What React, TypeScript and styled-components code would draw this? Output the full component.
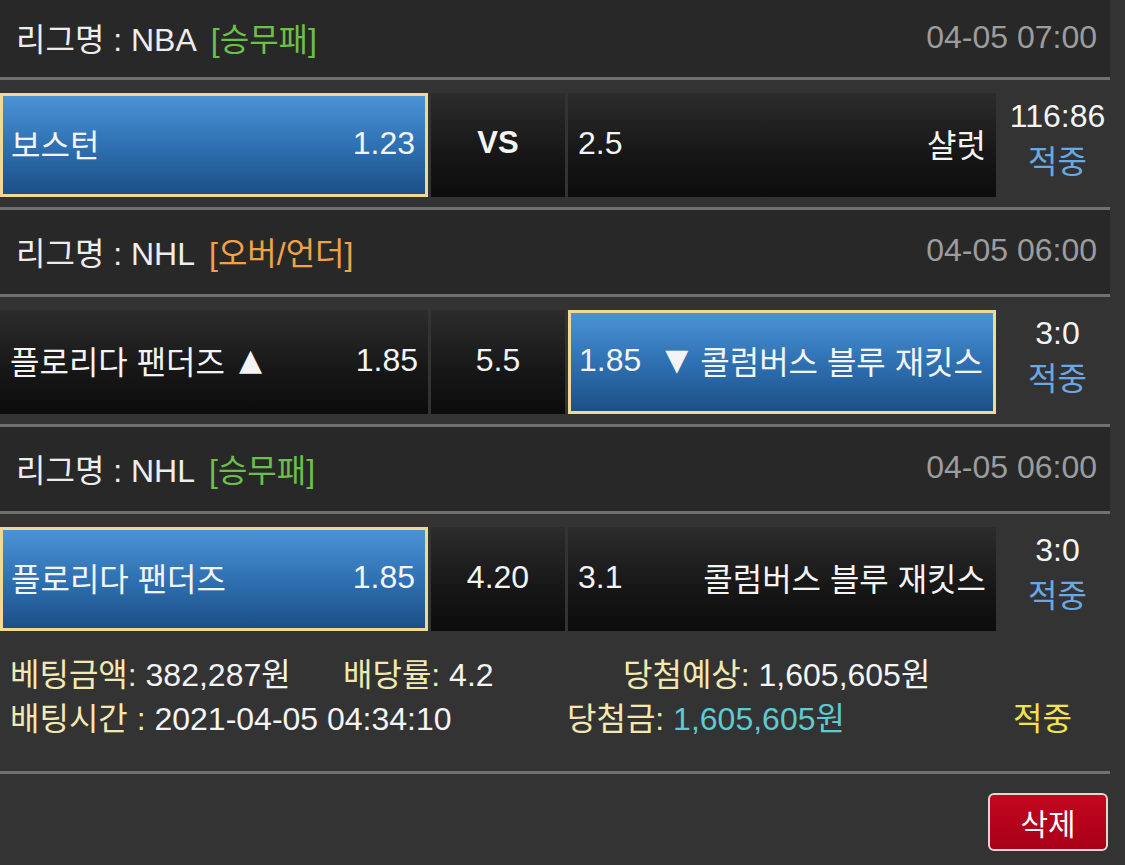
import React from 'react';
import styled, { createGlobalStyle } from 'styled-components';

const GlobalStyle = createGlobalStyle`
    html, body {
        margin: 0;
        padding: 0;
        background: #333333;
    }
    body {
        font-family: "Liberation Sans", "Noto Sans CJK KR", sans-serif;
        color: #f2f2f2;
    }
`;

const Page = styled.div`
    width: 1110px;
    background: #333333;
`;

const LeagueHeader = styled.div<{ $h: number }>`
    height: ${p => p.$h}px;
    display: flex;
    align-items: center;
    justify-content: space-between;
    padding: 0 13px 3px 16px;
    box-sizing: border-box;
    background: #282828;
    border-bottom: 3px solid #707070;
    font-size: 32px;
`;

const LeagueName = styled.span`
    color: #ededed;
`;

const BetType = styled.span<{ $color: string }>`
    color: ${p => p.$color};
    margin-left: 14px;
`;

const MatchTime = styled.span`
    color: #9c9c9c;
`;

const MatchRow = styled.div<{ $line?: boolean }>`
    display: grid;
    grid-template-columns: 428px 134px 428px 1fr;
    column-gap: 3px;
    padding: 13px 0 10px;
    border-bottom: ${p => (p.$line ? '3px solid #707070' : 'none')};
`;

const Cell = styled.div<{ $picked?: boolean; $center?: boolean }>`
    height: 104px;
    box-sizing: border-box;
    display: flex;
    align-items: center;
    justify-content: ${p => (p.$center ? 'center' : 'space-between')};
    padding: 0 10px 4px;
    font-size: 32px;
    color: #f4f4f4;
    background: ${p =>
        p.$picked
            ? 'linear-gradient(to bottom, #4b93d6 0%, #2f71b3 50%, #1c4f86 100%)'
            : 'linear-gradient(to bottom, #2c2c2c 0%, #161616 60%, #0c0c0c 100%)'};
    border: ${p => (p.$picked ? '3px solid #f2d993' : 'none')};
    padding-left: ${p => (p.$picked ? '8px' : '10px')};
`;

const TeamName = styled.span`
    display: flex;
    align-items: center;
`;

const Arrow = styled.span<{ $side: 'before' | 'after' }>`
    font-family: "DejaVu Sans", sans-serif;
    font-size: 30px;
    line-height: 1;
    ${p => (p.$side === 'after' ? 'margin-left: 14px;' : 'margin-right: 12px;')}
`;

const VsText = styled.span`
    font-weight: bold;
    font-size: 31px;
`;

const ScoreBox = styled.div`
    display: flex;
    flex-direction: column;
    align-items: center;
    justify-content: center;
    padding: 0 0 12px 6px;
    font-size: 32px;
    line-height: 46px;
`;

const Score = styled.span`
    color: #f4f4f4;
`;

const ResultText = styled.span<{ $color: string }>`
    color: ${p => p.$color};
`;

const Summary = styled.div`
    padding: 9px 0 33px 10px;
    border-bottom: 3px solid #707070;
    font-size: 32px;
`;

const SummaryLine = styled.div`
    display: flex;
    height: 44px;
    align-items: center;
`;

const SummaryItem = styled.span<{ $w?: number }>`
    ${p => (p.$w ? `width: ${p.$w}px;` : '')}
    flex-shrink: 0;
    white-space: nowrap;
`;

const Label = styled.span`
    color: #f3e9ae;
`;

const Value = styled.span<{ $color?: string }>`
    color: ${p => p.$color || '#f4f4f4'};
`;

const ButtonBar = styled.div`
    display: flex;
    justify-content: flex-end;
    padding: 19px 2px 0 0;
`;

const DeleteButton = styled.button`
    width: 120px;
    height: 58px;
    background: linear-gradient(to bottom, #c4061f, #a80018);
    border: 2px solid #e4d4d4;
    border-radius: 6px;
    color: #ffffff;
    font-family: "Liberation Sans", "Noto Sans CJK KR", sans-serif;
    font-size: 30px;
    cursor: pointer;
`;

type Side = { name: string; odds: string; picked?: boolean; arrow?: '▲' | '▼' };

type Match = {
    league: string;
    type: string;
    typeColor: string;
    time: string;
    home: Side;
    mid: string;
    away: Side;
    score: string;
    headerHeight: number;
    bold?: boolean;
    line?: boolean;
};

const matches: Match[] = [
    {
        league: 'NBA',
        type: '[승무패]',
        typeColor: '#6dbf4b',
        time: '04-05 07:00',
        home: { name: '보스턴', odds: '1.23', picked: true },
        mid: 'VS',
        away: { name: '샬럿', odds: '2.5' },
        score: '116:86',
        headerHeight: 80,
        bold: true,
        line: true,
    },
    {
        league: 'NHL',
        type: '[오버/언더]',
        typeColor: '#f0a246',
        time: '04-05 06:00',
        home: { name: '플로리다 팬더즈', odds: '1.85', arrow: '▲' },
        mid: '5.5',
        away: { name: '콜럼버스 블루 재킷스', odds: '1.85', picked: true, arrow: '▼' },
        score: '3:0',
        headerHeight: 87,
        line: true,
    },
    {
        league: 'NHL',
        type: '[승무패]',
        typeColor: '#6dbf4b',
        time: '04-05 06:00',
        home: { name: '플로리다 팬더즈', odds: '1.85', picked: true },
        mid: '4.20',
        away: { name: '콜럼버스 블루 재킷스', odds: '3.1' },
        score: '3:0',
        headerHeight: 87,
    },
];

export default function App() {
    return (
        <Page>
            <GlobalStyle />
            {matches.map((m, i) => (
                <div key={i}>
                    <LeagueHeader $h={m.headerHeight}>
                        <div>
                            <LeagueName>리그명 : {m.league}</LeagueName>
                            <BetType $color={m.typeColor}>{m.type}</BetType>
                        </div>
                        <MatchTime>{m.time}</MatchTime>
                    </LeagueHeader>
                    <MatchRow $line={m.line}>
                        <Cell $picked={m.home.picked}>
                            <TeamName>
                                {m.home.name}
                                {m.home.arrow && <Arrow $side="after">{m.home.arrow}</Arrow>}
                            </TeamName>
                            <span>{m.home.odds}</span>
                        </Cell>
                        <Cell $center>
                            {m.bold ? <VsText>{m.mid}</VsText> : <span>{m.mid}</span>}
                        </Cell>
                        <Cell $picked={m.away.picked}>
                            <span>{m.away.odds}</span>
                            <TeamName>
                                {m.away.arrow && <Arrow $side="before">{m.away.arrow}</Arrow>}
                                {m.away.name}
                            </TeamName>
                        </Cell>
                        <ScoreBox>
                            <Score>{m.score}</Score>
                            <ResultText $color="#6aa8e2">적중</ResultText>
                        </ScoreBox>
                    </MatchRow>
                </div>
            ))}
            <Summary>
                <SummaryLine>
                    <SummaryItem $w={333}>
                        <Label>베팅금액:</Label> <Value>382,287원</Value>
                    </SummaryItem>
                    <SummaryItem $w={280}>
                        <Label>배당률:</Label> <Value>4.2</Value>
                    </SummaryItem>
                    <SummaryItem>
                        <Label>당첨예상:</Label> <Value>1,605,605원</Value>
                    </SummaryItem>
                </SummaryLine>
                <SummaryLine>
                    <SummaryItem $w={557}>
                        <Label>배팅시간 :</Label> <Value>2021-04-05 04:34:10</Value>
                    </SummaryItem>
                    <SummaryItem $w={446}>
                        <Label>당첨금:</Label> <Value $color="#5ccbd2">1,605,605원</Value>
                    </SummaryItem>
                    <SummaryItem>
                        <Value $color="#f2e34e">적중</Value>
                    </SummaryItem>
                </SummaryLine>
            </Summary>
            <ButtonBar>
                <DeleteButton>삭제</DeleteButton>
            </ButtonBar>
        </Page>
    );
}
